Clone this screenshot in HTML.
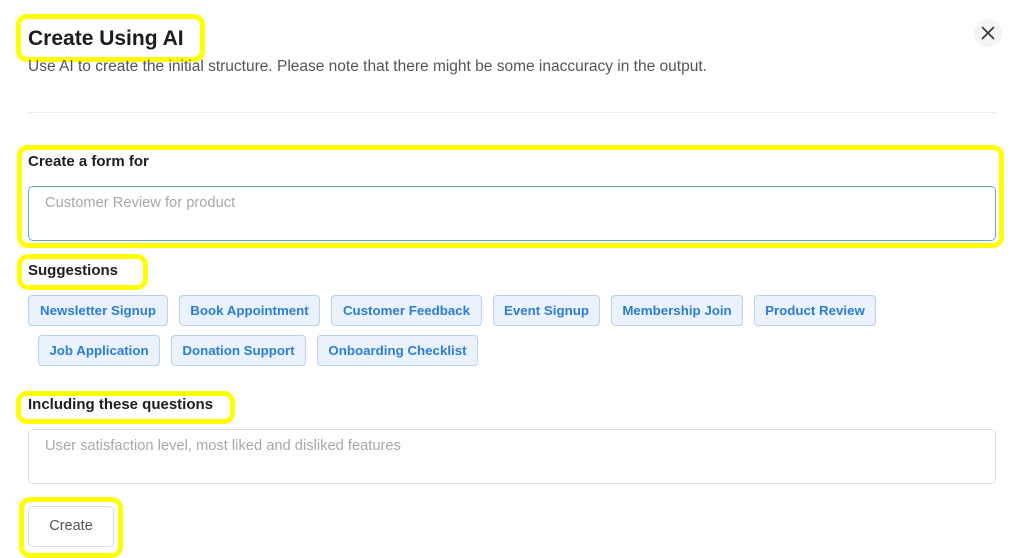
<!DOCTYPE html>
<html><head><style>
body{margin:0;width:1024px;height:558px;background:#fff;position:relative;overflow:hidden;font-family:"Liberation Sans",sans-serif;}
.a{position:absolute;}
.y{position:absolute;border:5px solid #ffff00;border-radius:11px;box-sizing:border-box;}
.lbl{position:absolute;font-size:15px;font-weight:bold;color:#1e1e1e;}
.chip{position:absolute;height:31px;box-sizing:border-box;border:1px solid #b8d2ee;background:#e9f2fd;border-radius:4px;color:#2d7dd2;font-size:13.3px;font-weight:bold;line-height:29px;text-align:center;}
.ta{position:absolute;box-sizing:border-box;border-radius:5px;background:#fff;font-size:14.7px;color:#a8a8a8;padding:8px 0 0 16px;}
</style></head><body>
<div class="y" style="left:16px;top:14px;width:189px;height:48px"></div>
<div class="a" style="left:28px;top:27px;font-size:21px;font-weight:bold;color:#1c1c1c">Create Using AI</div>
<div class="a" style="left:28px;top:58px;font-size:15.5px;color:#555">Use AI to create the initial structure. Please note that there might be some inaccuracy in the output.</div>
<div class="a" style="left:974px;top:19px;width:28px;height:28px;border-radius:50%;background:#f4f4f4"></div>
<svg class="a" style="left:981px;top:26px" width="14" height="14" viewBox="0 0 14 14"><path d="M1 1L13 13M13 1L1 13" stroke="#333" stroke-width="1.6"/></svg>
<div class="a" style="left:28px;top:112px;width:968px;height:1px;background:#eee"></div>
<div class="y" style="left:17px;top:145px;width:987px;height:103px"></div>
<div class="lbl" style="left:28px;top:153px">Create a form for</div>
<div class="ta" style="left:28px;top:186px;width:968px;height:55px;border:1px solid #6aa6c4">Customer Review for product</div>
<div class="y" style="left:17px;top:254px;width:131px;height:36px"></div>
<div class="lbl" style="left:28px;top:262px">Suggestions</div>
<div class="chip" style="left:28px;top:295px;width:140px">Newsletter Signup</div>
<div class="chip" style="left:179px;top:295px;width:141px">Book Appointment</div>
<div class="chip" style="left:331px;top:295px;width:151px">Customer Feedback</div>
<div class="chip" style="left:493px;top:295px;width:107px">Event Signup</div>
<div class="chip" style="left:611px;top:295px;width:132px">Membership Join</div>
<div class="chip" style="left:754px;top:295px;width:122px">Product Review</div>
<div class="chip" style="left:38px;top:335px;width:122px">Job Application</div>
<div class="chip" style="left:171px;top:335px;width:135px">Donation Support</div>
<div class="chip" style="left:317px;top:335px;width:161px">Onboarding Checklist</div>
<div class="y" style="left:16px;top:391px;width:219px;height:33px"></div>
<div class="lbl" style="left:28px;top:396px">Including these questions</div>
<div class="ta" style="left:28px;top:429px;width:968px;height:55px;border:1px solid #ddd">User satisfaction level, most liked and disliked features</div>
<div class="y" style="left:19px;top:497px;width:104px;height:61px"></div>
<div class="a" style="left:28px;top:506px;width:86px;height:41px;box-sizing:border-box;border:1px solid #ddd;border-radius:5px;background:#fff;font-size:14.5px;color:#555;text-align:center;line-height:39px">Create</div>
</body></html>
